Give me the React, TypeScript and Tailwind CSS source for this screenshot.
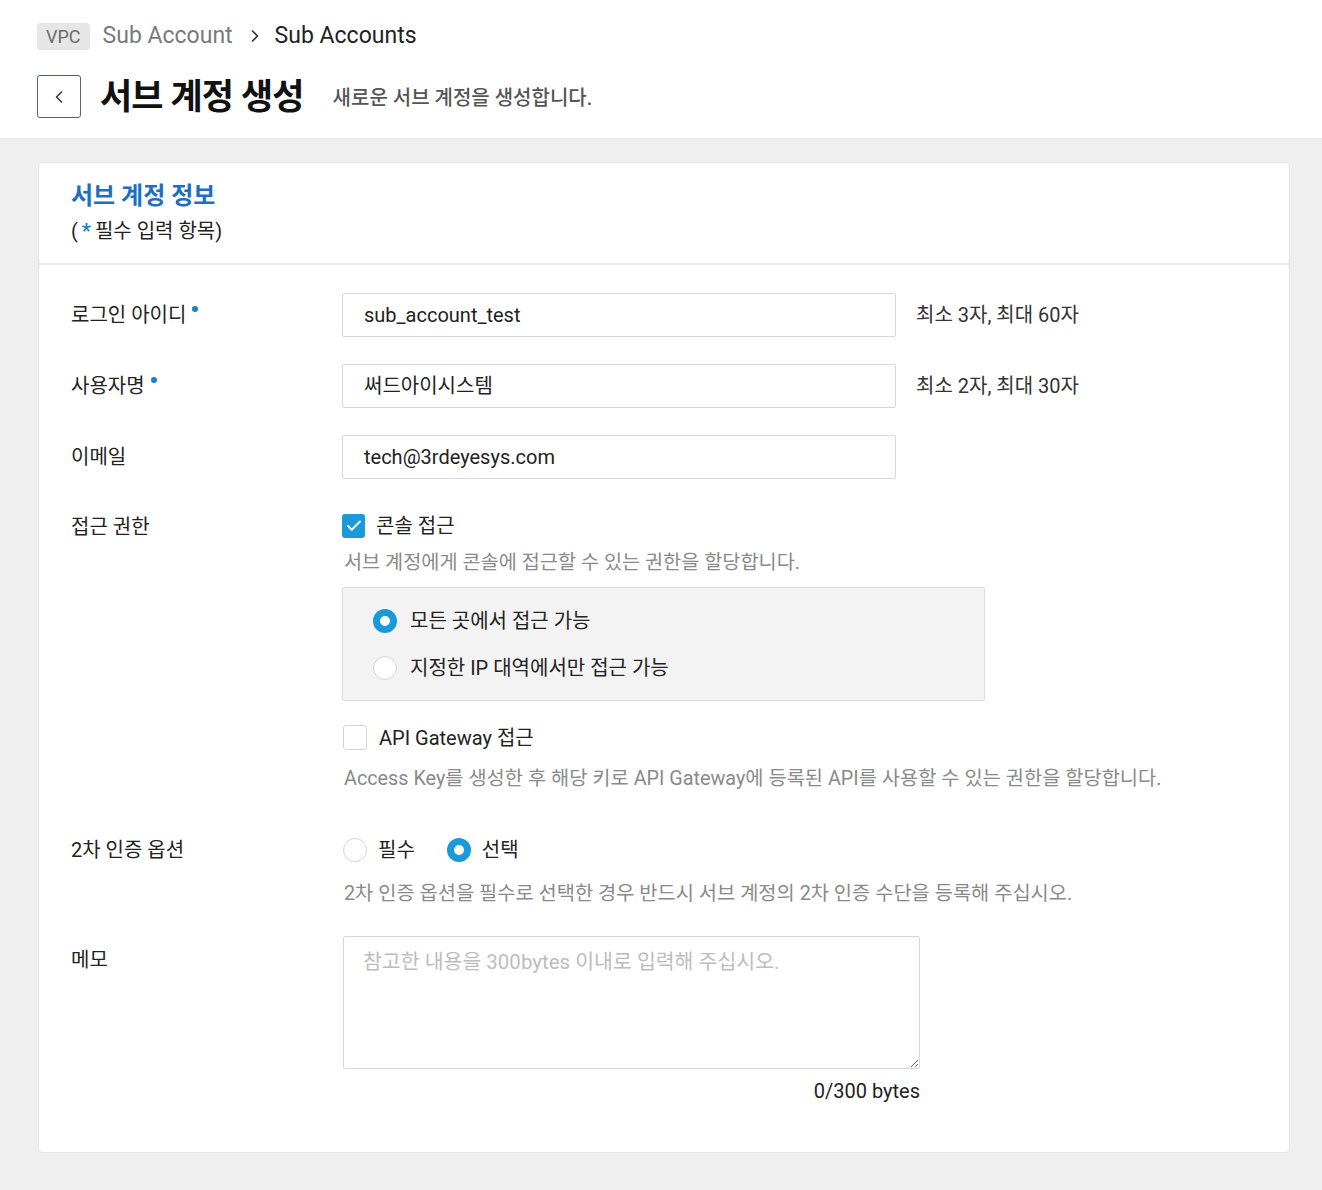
import { ChevronLeft, ChevronRight, Check } from 'lucide-react';

const font = { fontFamily: 'Roboto, "Noto Sans CJK KR", sans-serif' };

function Req() {
  return <span className="ml-1.5 inline-block w-[6px] h-[6px] rounded-full bg-[#1a7fd0] align-top mt-[6px]" />;
}

function Radio({ checked }: { checked?: boolean }) {
  return checked ? (
    <span className="block w-6 h-6 rounded-full border-[7px] border-[#1a9ad8] bg-white shrink-0" />
  ) : (
    <span className="block w-6 h-6 rounded-full border border-[#d4d4d4] bg-white shrink-0" />
  );
}

export default function App() {
  return (
    <div className="min-h-[1190px] bg-[#efefef] text-[#222] pb-[38px]" style={font}>
      {/* Header */}
      <header className="bg-white h-[138px] px-[37px] pt-[22px]">
        <div className="flex items-center h-[28px]">
          <span className="px-[9px] h-[27px] flex items-center rounded bg-[#e6e6e6] text-[#6b6b6b] text-[18px]">VPC</span>
          <span className="ml-[13px] text-[23px] text-[#7a7a7a]">Sub Account</span>
          <ChevronRight className="ml-[12px] w-5 h-5 text-[#333]" strokeWidth={2} />
          <span className="ml-[10px] text-[23px] text-[#222]">Sub Accounts</span>
        </div>
        <div className="flex items-center mt-[22px]">
          <button className="mb-[3px] w-[44px] h-[43px] border border-[#51637c] rounded-[3px] flex items-center justify-center bg-white">
            <ChevronLeft className="w-5 h-5 text-[#333]" strokeWidth={1.8} />
          </button>
          <h1 className="ml-[19px] text-[35px] font-bold text-[#111] tracking-tight">서브 계정 생성</h1>
          <p className="ml-[29px] text-[20px] font-medium text-[#555]">새로운 서브 계정을 생성합니다.</p>
        </div>
      </header>

      {/* Card */}
      <div className="ml-[38px] mr-[32px] mt-[24px] bg-white rounded-[4px] border border-[#e6e6e6]">
        <div className="px-[32px] pt-[15px] pb-[15px] border-b-2 border-[#e8e8e8]">
          <h2 className="text-[24px] font-bold text-[#1c6fc4] leading-[36px]">서브 계정 정보</h2>
          <p className="text-[20px] text-[#222] leading-[34px]">
            (<span className="mx-[4px] text-[#1a7fd0] font-bold">*</span>필수 입력 항목)
          </p>
        </div>

        <div className="px-[32px] pt-[28px] pb-[46px] text-[20px]">
          {/* Login ID */}
          <div className="flex items-center h-[44px]">
            <div className="w-[271px] text-[#222]">
              로그인 아이디<Req />
            </div>
            <div className="w-[554px] h-[44px] border border-[#d8d8d8] rounded-[2px] px-[21px] flex items-center text-[#222]">
              sub_account_test
            </div>
            <span className="ml-[20px] text-[#333]">최소 3자, 최대 60자</span>
          </div>

          {/* Username */}
          <div className="flex items-center h-[44px] mt-[27px]">
            <div className="w-[271px] text-[#222]">
              사용자명<Req />
            </div>
            <div className="w-[554px] h-[44px] border border-[#d8d8d8] rounded-[2px] px-[21px] flex items-center text-[#222]">
              써드아이시스템
            </div>
            <span className="ml-[20px] text-[#333]">최소 2자, 최대 30자</span>
          </div>

          {/* Email */}
          <div className="flex items-center h-[44px] mt-[27px]">
            <div className="w-[271px] text-[#222]">이메일</div>
            <div className="w-[554px] h-[44px] border border-[#d8d8d8] rounded-[2px] px-[21px] flex items-center text-[#222]">
              tech@3rdeyesys.com
            </div>
          </div>

          {/* Access */}
          <div className="flex mt-[32px]">
            <div className="w-[271px] text-[#222] leading-[30px] pt-[1px]">접근 권한</div>
            <div className="flex-1">
              <div className="flex items-center h-[30px]">
                <span className="w-[23px] h-[24px] rounded-[3px] bg-[#1a9ad8] flex items-center justify-center">
                  <Check className="w-[18px] h-[18px] text-white" strokeWidth={2.5} />
                </span>
                <span className="ml-[11px] text-[#222]">콘솔 접근</span>
              </div>
              <p className="mt-[7px] text-[19.7px] text-[#8a8a8a] pl-[2px]">서브 계정에게 콘솔에 접근할 수 있는 권한을 할당합니다.</p>
              <div className="mt-[9px] w-[643px] h-[114px] bg-[#f3f3f3] border border-[#dcdcdc] rounded-[2px] pl-[30px] pt-[21px]">
                <div className="flex items-center h-[24px]">
                  <Radio checked />
                  <span className="ml-[13px] text-[#222]">모든 곳에서 접근 가능</span>
                </div>
                <div className="flex items-center h-[24px] mt-[23px]">
                  <Radio />
                  <span className="ml-[13px] text-[#222]">지정한 IP 대역에서만 접근 가능</span>
                </div>
              </div>

              <div className="flex items-center h-[30px] mt-[22px]">
                <span className="ml-[1px] w-[24px] h-[25px] rounded-[3px] border border-[#d4d4d4] bg-white" />
                <span className="ml-[12px] text-[#222]">API Gateway 접근</span>
              </div>
              <p className="mt-[11px] text-[19.8px] text-[#8a8a8a] pl-[2px]">
                Access Key를 생성한 후 해당 키로 API Gateway에 등록된 API를 사용할 수 있는 권한을 할당합니다.
              </p>
            </div>
          </div>

          {/* 2FA */}
          <div className="flex mt-[42px]">
            <div className="w-[271px] text-[#222] leading-[30px]">2차 인증 옵션</div>
            <div className="flex-1">
              <div className="flex items-center h-[30px]">
                <span className="ml-[1px]"><Radio /></span>
                <span className="ml-[11px] text-[#222]">필수</span>
                <span className="ml-[32px]"><Radio checked /></span>
                <span className="ml-[11px] text-[#222]">선택</span>
              </div>
              <p className="mt-[14px] text-[19.8px] text-[#8a8a8a] pl-[2px]">
                2차 인증 옵션을 필수로 선택한 경우 반드시 서브 계정의 2차 인증 수단을 등록해 주십시오.
              </p>
            </div>
          </div>

          {/* Memo */}
          <div className="flex mt-[27px]">
            <div className="w-[272px] text-[#222] pt-[9px]">메모</div>
            <div className="w-[577px]">
              <textarea
                className="block w-full h-[133px] border border-[#d8d8d8] rounded-[2px] px-[19px] py-[10px] text-[20.5px] placeholder:text-[#bdbdbd] outline-none"
                placeholder="참고한 내용을 300bytes 이내로 입력해 주십시오."
              />
              <p className="mt-[7px] text-right text-[#222]">0/300 bytes</p>
            </div>
          </div>
        </div>
      </div>
    </div>
  );
}
